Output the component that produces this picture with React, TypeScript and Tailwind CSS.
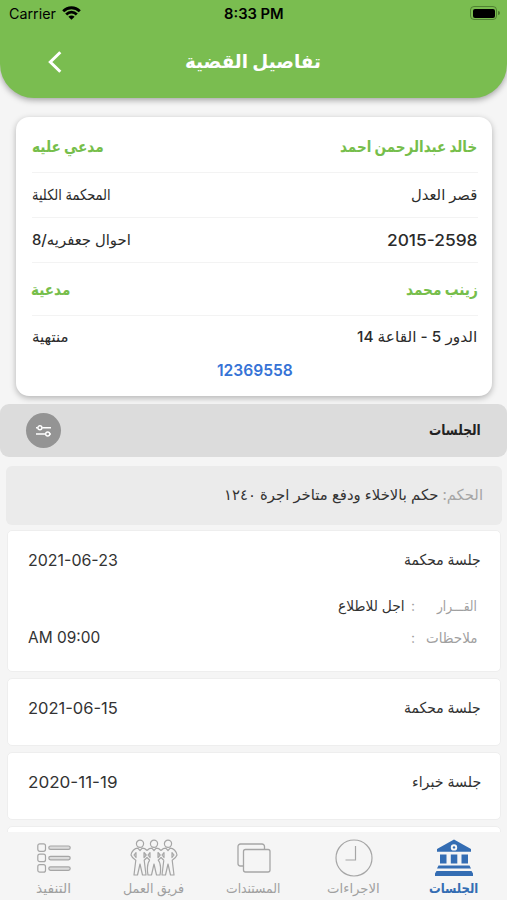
import { useLayoutEffect, useRef, useState, type ReactNode } from 'react';
import clsx from 'clsx';

type FitProps = { w: number; ltr?: boolean; className?: string; children: ReactNode };

/* One line of text, stretched or condensed horizontally to a given width. */
function Fit({ w, ltr, className, children }: FitProps) {
  const ref = useRef<HTMLSpanElement>(null);
  const [scale, setScale] = useState(1);
  useLayoutEffect(() => {
    if (ref.current) setScale(w / ref.current.offsetWidth);
  }, [w]);
  return (
    <span dir={ltr ? 'ltr' : 'rtl'} className={clsx('block shrink-0 whitespace-nowrap', className)} style={{ width: w }}>
      <span
        ref={ref}
        className={clsx('inline-block', ltr ? 'origin-left' : 'origin-right')}
        style={{ transform: `scaleX(${scale})` }}
      >
        {children}
      </span>
    </span>
  );
}

function StatusBar() {
  return (
    <div dir="ltr" className="flex h-7 items-center pl-[9px] pr-[7px] text-black">
      <div className="flex flex-1 items-center gap-[6px]">
        <Fit w={47} ltr className="text-[14px] leading-7">Carrier</Fit>
        <svg width="19" height="14" viewBox="0 0 19 14" fill="none" stroke="currentColor" strokeWidth="2.8" className="-mt-[2px]">
          <path d="M1.2 5.2C5.8 .6 13.2 .6 17.8 5.2" />
          <path d="M4.2 8.4c3-3 7.6-3 10.6 0" />
          <path d="M9.500 13.800 6.400 10.700c1.700-1.600 4.500-1.600 6.200 0z" fill="currentColor" stroke="none" />
        </svg>
      </div>
      <Fit w={60} ltr className="-ml-[2px] text-[14px] font-semibold leading-7">8:33 PM</Fit>
      <div className="flex flex-1 items-center justify-end gap-px pb-[2px]">
        <div className="h-[14px] w-[27px] rounded-[4px] border border-[#3f6a25]/70 p-[1.5px]">
          <div className="h-full rounded-[2px] bg-black" />
        </div>
        <div className="h-[4px] w-[2px] rounded-r-full bg-[#4c7a30]" />
      </div>
    </div>
  );
}

function Header() {
  return (
    <header className="h-[98px] shrink-0 rounded-b-[34px] bg-[#7abd50] shadow-[0_2px_6px_rgba(0,0,0,0.35)]">
      <StatusBar />
      <div dir="ltr" className="flex h-[68px] items-center pl-[48px]">
        <svg width="14" height="22" viewBox="0 0 14 22" fill="none" stroke="#fff" strokeWidth="3">
          <path d="M12.3 1.2 2.3 11l10 9.800" />
        </svg>
        <Fit w={136} className="ml-[123px] text-[19px] font-bold leading-7 text-white">تفاصيل القضية</Fit>
      </div>
    </header>
  );
}

type Cell = { text: string; w: number; ltr?: boolean };
type CaseRow = { right: Cell; left: Cell; green?: boolean; box: string };

const caseRows: CaseRow[] = [
  { right: { text: 'خالد عبدالرحمن احمد', w: 137 }, left: { text: 'مدعي عليه', w: 72 }, green: true, box: 'h-[56px] pt-[3px] border-b' },
  { right: { text: 'قصر العدل', w: 66 }, left: { text: 'المحكمة الكلية', w: 79 }, box: 'h-[45px] border-b' },
  { right: { text: '2015-2598', w: 91, ltr: true }, left: { text: 'احوال جعفريه/8', w: 99 }, box: 'h-[45px] border-b' },
  { right: { text: 'زينب محمد', w: 72 }, left: { text: 'مدعية', w: 39 }, green: true, box: 'h-[53px] pb-px border-b' },
  { right: { text: 'الدور 5 - القاعة 14', w: 120 }, left: { text: 'منتهية', w: 37 }, box: 'h-[42px]' },
];

function CaseCard() {
  return (
    <section className="mx-[15.5px] mt-[19px] h-[279px] shrink-0 rounded-[13px] bg-white pl-[16px] pr-[14px] shadow-[0_2px_6px_rgba(0,0,0,0.28)]">
      {caseRows.map((r) => (
        <div key={r.right.text} className={clsx('flex items-center justify-between border-[#f3f3f3]', r.box, r.green ? 'text-[16px] font-bold text-[#76be4b]' : 'text-[15px] font-medium text-[#2b2b2b]')}>
          <Fit w={r.right.w} ltr={r.right.ltr} className={clsx(r.right.ltr && 'text-[16px]')}>{r.right.text}</Fit>
          <Fit w={r.left.w}>{r.left.text}</Fit>
        </div>
      ))}
      <div className="flex justify-center pl-px text-[16px] font-semibold leading-6 text-[#3673d6]">
        <Fit w={76} ltr>12369558</Fit>
      </div>
    </section>
  );
}

function SectionBar() {
  return (
    <div className="mt-[8px] flex h-[53px] shrink-0 items-center justify-between rounded-[9px] bg-[#dcdcdc] px-[26px]">
      <Fit w={52} className="text-[15px] font-bold text-[#222]">الجلسات</Fit>
      <div className="flex size-[35px] items-center justify-center rounded-full bg-[#949494]">
        <svg width="16" height="12" viewBox="0 0 16 12" fill="none" stroke="#fff" strokeWidth="1.4">
          <path d="M0 2.800h1.700M6.200 2.800H15M0 9h9.500M13.800 9H15" />
          <circle cx="3.900" cy="2.800" r="2" />
          <circle cx="11.700" cy="9" r="2" />
        </svg>
      </div>
    </div>
  );
}

function Verdict() {
  return (
    <div className="ml-[6px] mr-[5px] mt-[9px] flex h-[59px] shrink-0 items-center rounded-[6px] bg-[#ebebeb] pr-[19px] text-[15px] text-[#333]">
      <Fit w={259}>
        <span className="text-[#a5a5a5]">الحكم:</span> حكم بالاخلاء ودفع متاخر اجرة ١٢٤٠
      </Fit>
    </div>
  );
}

function Session({ title, w, date, h, children }: { title: string; w: number; date: string; h: string; children?: ReactNode }) {
  return (
    <article className={clsx('shrink-0 rounded-[5px] border border-[#eeeeee] bg-white pl-[20px] pr-[19px]', h)}>
      <div className="flex h-[58px] items-center justify-between text-[15px] text-[#333]">
        <Fit w={w}>{title}</Fit>
        <Fit w={90} ltr className="text-[16.5px]">{date}</Fit>
      </div>
      {children}
    </article>
  );
}

function Sessions() {
  return (
    <div className="ml-[7px] mr-[6px] mt-[5px] flex min-h-0 flex-1 flex-col gap-[6px] overflow-hidden">
      <Session title="جلسة محكمة" w={77} date="2021-06-23" h="h-[142px]">
        <div className="flex h-[32px] items-center pr-[4px] text-[14px] text-[#a0a0a0]">
          <div className="w-[62px]"><Fit w={40}>القـــرار</Fit></div>
          <span className="w-[10px]">:</span>
          <Fit w={67} className="text-[#333]">اجل للاطلاع</Fit>
        </div>
        <div className="flex h-[32px] items-center pr-[4px] text-[14px] text-[#a0a0a0]">
          <div className="w-[62px]"><Fit w={51}>ملاحظات</Fit></div>
          <span className="flex-1">:</span>
          <Fit w={72} ltr className="text-[16.5px] text-[#333]">AM 09:00</Fit>
        </div>
      </Session>
      <Session title="جلسة محكمة" w={77} date="2021-06-15" h="h-[68px]" />
      <Session title="جلسة خبراء" w={69} date="2020-11-19" h="h-[68px]" />
      <div className="h-[68px] shrink-0 rounded-[5px] border border-[#eeeeee] bg-white" />
    </div>
  );
}

function BankIcon() {
  return (
    <svg width="38" height="38" viewBox="0 0 38 38" fill="#346db3">
      <path fillRule="evenodd" d="M19 .4 36 10v2.800H2V10zM19 5.200a3.200 3.200 0 1 0 0 6.400 3.200 3.200 0 0 0 0-6.400z" />
      <circle cx="19" cy="8.400" r="1.200" />
      <path d="M5 15.500h6.500v9H5zM15.800 15.500h6.500v9h-6.500zM26.500 15.500H33v9h-6.500z" />
      <path d="M3.500 26.500h31l1.500 3H2zM1.500 32h35l1.500 2.500V37H0v-2.500z" />
    </svg>
  );
}

function ClockIcon() {
  return (
    <svg width="38" height="38" viewBox="0 0 38 38" fill="none" stroke="#a6a6a6" strokeWidth="1.200">
      <circle cx="19" cy="19" r="18" />
      <path d="M20.500 7v14H10.500" />
    </svg>
  );
}

function DocsIcon() {
  return (
    <svg width="34" height="30" viewBox="0 0 34 30" fill="none" stroke="#a6a6a6" strokeWidth="1.300">
      <rect x="6.500" y="6.500" width="26.500" height="22.500" rx="2" />
      <path d="M6.500 23H3.500a2.500 2.500 0 0 1-2.500-2.500V3.500A2.500 2.500 0 0 1 3.500 1H25a2.500 2.500 0 0 1 2.500 2.500v3" />
    </svg>
  );
}

function TeamIcon() {
  return (
    <svg width="48" height="38" viewBox="0 0 48 38" fill="none" stroke="#a6a6a6" strokeWidth="1.200" strokeLinejoin="round">
      <circle cx="10" cy="4.800" r="3.600" />
      <circle cx="24" cy="4.800" r="3.600" />
      <circle cx="38" cy="4.800" r="3.600" />
      <path d="M17 11.500c-1.500-1.600-3-2.300-4.800-2.300L10 11.500 7.800 9.200C4.500 9.200 1.500 12.500 1 16c.8 2.200 2.600 4 4.800 5.200L4 36h3.500L10 25l2.500 11H16l-1.800-14.800L17 18.500l2.800 2.700" />
      <path d="M31 11.500c-1.500-1.600-3-2.300-4.800-2.300L24 11.500l-2.200-2.300c-1.800 0-3.300.7-4.800 2.300M19.800 21.200C17 24 17 32 18 36h3.500L24 25l2.500 11H30c1-4 1-12-1.800-14.800L31 18.500l2.800 2.700" />
      <path d="M31 11.500c1.500-1.600 3-2.300 4.800-2.300l2.200 2.300 2.200-2.300c3.300 0 6.300 3.300 6.800 6.800-.8 2.200-2.600 4-4.800 5.200L44 36h-3.500L38 25l-2.500 11H32l1.800-14.800" />
      <path d="m6 13.500-2 2.500 2 2.500zM14 13.500l2.200 2.500-2.200 2.500zM20 13.500l-2 2.500 2 2.500zM28 13.500l2.200 2.500-2.200 2.500zM34 13.500l-2 2.500 2 2.500zM42 13.500l2 2.500-2 2.500z" />
    </svg>
  );
}

function ListIcon() {
  return (
    <svg width="34" height="30" viewBox="0 0 34 30" fill="none" stroke="#a6a6a6" strokeWidth="1.200">
      {[0.8, 11.2, 21.7].map((y) => (
        <g key={y}>
          <rect x=".8" y={y} width="7.700" height="7.500" rx="2" />
          <rect x="11.800" y={y + 2.2} width="21.400" height="3.400" rx="1.700" fill="#dcdcdc" />
        </g>
      ))}
    </svg>
  );
}

const tabs = [
  { label: 'الجلسات', w: 49, icon: <BankIcon />, active: true },
  { label: 'الاجراءات', w: 53, icon: <ClockIcon /> },
  { label: 'المستندات', w: 54, icon: <DocsIcon /> },
  { label: 'فريق العمل', w: 61, icon: <TeamIcon /> },
  { label: 'التنفيذ', w: 35, icon: <ListIcon /> },
];

function TabBar() {
  return (
    <nav className="flex h-[68px] shrink-0 justify-center bg-[#f5f5f5] pt-[7px]">
      {tabs.map((t) => (
        <div key={t.label} className={clsx('flex w-[100px] flex-col items-center', t.active ? 'font-bold text-[#346db3]' : 'text-[#a0a0a0]')}>
          <div className="flex h-[38px] items-center">{t.icon}</div>
          <Fit w={t.w} className="text-[13.5px] leading-[22px]">{t.label}</Fit>
        </div>
      ))}
    </nav>
  );
}

export default function App() {
  return (
    <div dir="rtl" className="flex h-[900px] w-[507px] flex-col overflow-hidden bg-[#f5f5f5] font-[Inter,'DejaVu_Sans',sans-serif]">
      <Header />
      <CaseCard />
      <SectionBar />
      <Verdict />
      <Sessions />
      <TabBar />
    </div>
  );
}
